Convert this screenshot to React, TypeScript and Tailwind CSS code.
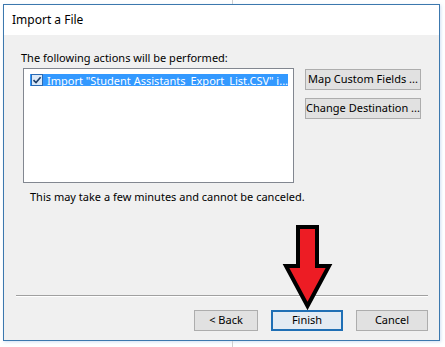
import React from 'react';

const Btn: React.FC<{ label: string; className?: string; primary?: boolean }> = ({ label, className = '', primary }) => (
  <div
    className={`flex items-center justify-center h-[21px] text-[11px] text-black whitespace-nowrap ${
      primary ? 'border-2 border-[#1f6fb5] bg-[#e3ebf3]' : 'border border-[#adadad] bg-[#e1e1e1]'
    } ${className}`}
  >
    {label}
  </div>
);

const Arrow = () => (
  <svg className="absolute left-0 top-0 pointer-events-none" width="445" height="347" viewBox="0 0 445 347">
    <polygon
      points="298,227 317,227 317,266 329,266 307.5,306 286,266 298,266"
      fill="#ed1c24"
      stroke="#000"
      strokeWidth="4"
      strokeLinejoin="miter"
    />
  </svg>
);

export default function App() {
  return (
    <div className="relative w-[445px] h-[347px] bg-white flex flex-col overflow-hidden font-['Noto_Sans',sans-serif] text-[11px] text-black">
      {/* window behind */}
      <div className="h-[4px] shrink-0 flex">
        <div className="ml-[232px] w-px bg-[#cfcfcf]" />
      </div>

      <div className="ml-[3px] w-[437px] h-[337px] shrink-0 border border-[#3c78ae] flex flex-col shadow-[1px_1px_3px_rgba(120,170,220,0.35)]">
        <div className="h-[30px] shrink-0 bg-white flex items-center pl-[8px] text-[12px]">Import a File</div>

        <div className="flex-1 bg-[#f0f0f0] flex flex-col pl-[17px] pr-[11px]">
          <div className="mt-[15px] leading-[15px]">The following actions will be performed:</div>

          <div className="mt-[3px] flex items-start">
            <div className="ml-[2px] w-[271px] h-[115px] border border-[#828790] bg-white pt-[5px] pl-[6px] pr-[5px]">
              <div className="h-[12px] bg-[#3399ff] flex items-center text-white leading-none whitespace-nowrap overflow-hidden">
                <div className="ml-[1px] w-[12px] h-[12px] shrink-0 border border-[#2b6bb5] bg-[#dbe9f8] flex items-center justify-center">
                  <svg width="10" height="10" viewBox="0 0 10 10">
                    <path d="M1.5 5.2 L4 7.6 L8.6 2.2" fill="none" stroke="#1e3d66" strokeWidth="1.6" />
                  </svg>
                </div>
                <span className="ml-[4px]">Import "Student Assistants_Export_List.CSV" i...</span>
              </div>
            </div>

            <div className="ml-[11px] mt-[1px] flex flex-col gap-[8px]">
              <Btn label="Map Custom Fields ..." className="w-[116px]" />
              <Btn label="Change Destination ..." className="w-[116px]" />
            </div>
          </div>

          <div className="mt-[6px] pl-[9px] leading-[15px]">This may take a few minutes and cannot be canceled.</div>

          <div className="flex-1" />

          <div className="-ml-[5px] h-px bg-[#a0a0a0] border-b border-white box-content" />

          <div className="mt-[13px] mb-[9px] flex justify-end gap-[13px]">
            <Btn label="< Back" className="w-[64px]" />
            <Btn label="Finish" className="w-[72px]" primary />
            <Btn label="Cancel" className="w-[72px]" />
          </div>
        </div>
      </div>

      <div className="flex-1 flex">
        <div className="ml-[232px] w-px bg-[#cfcfcf]" />
      </div>

      <Arrow />
    </div>
  );
}
